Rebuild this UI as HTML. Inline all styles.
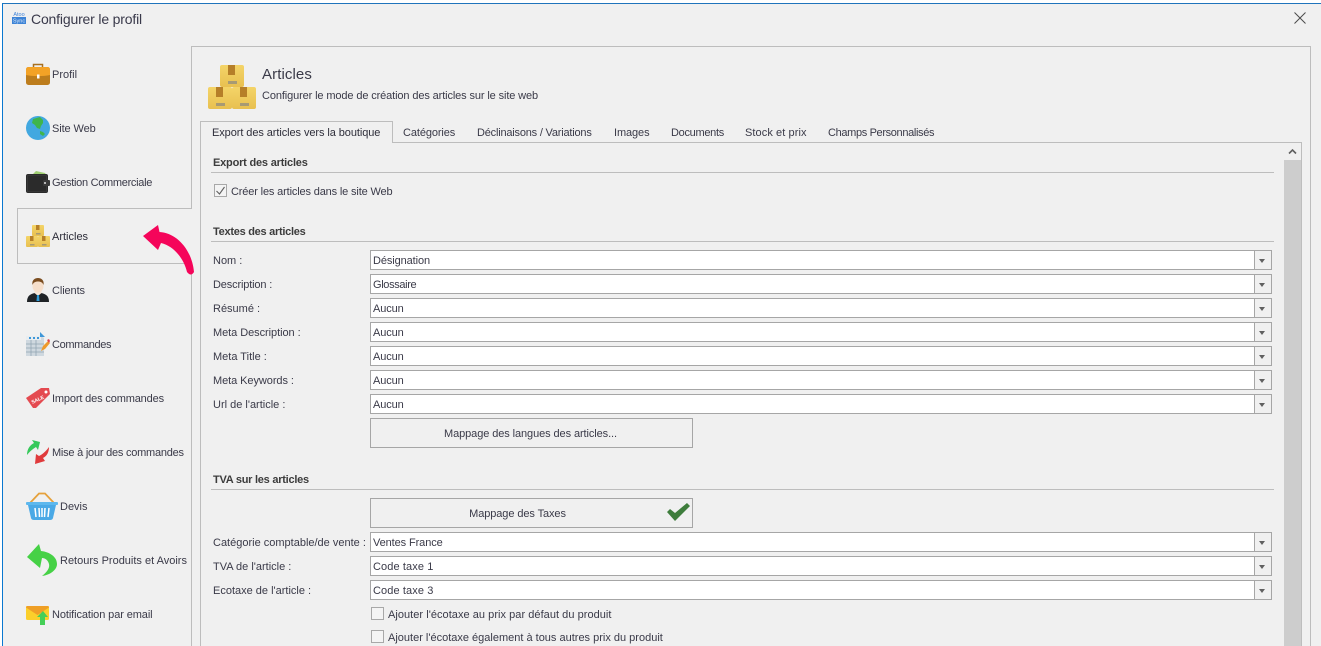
<!DOCTYPE html>
<html lang="fr"><head><meta charset="utf-8"><title>Configurer le profil</title>
<style>
html,body{margin:0;padding:0;width:1321px;height:646px;overflow:hidden;background:#fff}
body{position:relative;font:11px/14px "Liberation Sans",Arial,sans-serif;color:#3a3a48}
.a,.t,.c,.b,.l,.ck,svg{position:absolute}
#win{position:absolute;left:2px;top:3px;width:1319px;height:643px;background:#f0f0f0;border-left:1px solid #0a78d0;border-top:1px solid #1f74bc;box-sizing:border-box}
.t{white-space:nowrap;height:14px;margin-top:1px}
.l{background:#bdbdbd;left:211px;width:1063px;height:1px}
.h{font-weight:bold;color:#3c3c3c;left:213px}
.c{left:370px;width:902px;height:20px;box-sizing:border-box;background:#fff;border:1px solid #a6a6a6;padding-left:2px;line-height:21px;letter-spacing:-.1px}
.c i{position:absolute;right:0;top:0;width:16px;height:18px;background:#f0f0f0;border-left:1px solid #a6a6a6}
.c i:after{content:"";position:absolute;left:4px;top:8px;border:3.5px solid transparent;border-top:4px solid #606060;border-bottom:0}
.b{left:370px;width:323px;height:30px;box-sizing:border-box;border:1px solid #a6a6a6;background:#f0f0f0;text-align:center;line-height:30px;letter-spacing:-.09px}
.ck{width:13px;height:13px;box-sizing:border-box;border:1px solid #a8a8a8;background:#f4f4f4}
</style></head><body>
<svg width="0" height="0" style="position:absolute"><defs>
<linearGradient id="bg" x1="0" y1="0" x2="0" y2="1"><stop offset="0" stop-color="#f4d468"/><stop offset="1" stop-color="#e8c050"/></linearGradient>
<symbol id="box" viewBox="0 0 48 44">
<rect x="12" y="0" width="24" height="22" rx="2" fill="url(#bg)"/><rect x="20" y="0" width="7" height="10" fill="#b67f28"/><rect x="20" y="16" width="9" height="3" fill="#a79a74"/>
<rect x="0" y="22" width="24" height="22" rx="2" fill="url(#bg)"/><rect x="8" y="22" width="7" height="10" fill="#b67f28"/><rect x="8" y="38" width="9" height="3" fill="#a79a74"/>
<rect x="24" y="22" width="24" height="22" rx="2" fill="url(#bg)"/><rect x="32" y="22" width="7" height="10" fill="#b67f28"/><rect x="32" y="38" width="9" height="3" fill="#a79a74"/>
</symbol></defs></svg>

<div id="win"></div>

<!-- panel borders -->
<div class="a" style="left:191px;top:46px;width:1120px;height:1px;background:#bdbdbd"></div>
<div class="a" style="left:191px;top:46px;width:1px;height:163px;background:#bdbdbd"></div>
<div class="a" style="left:191px;top:263px;width:1px;height:383px;background:#bdbdbd"></div>
<div class="a" style="left:1310px;top:46px;width:1px;height:600px;background:#bdbdbd"></div>
<div class="a" style="left:17px;top:208px;width:175px;height:1px;background:#bdbdbd"></div>
<div class="a" style="left:17px;top:208px;width:1px;height:56px;background:#bdbdbd"></div>
<div class="a" style="left:17px;top:263px;width:175px;height:1px;background:#bdbdbd"></div>

<!-- title bar -->
<svg style="left:11px;top:11px" width="16" height="13" viewBox="0 0 16 13"><rect x="1" y="6" width="14" height="7" fill="#3d83d6"/><text x="8" y="5" text-anchor="middle" font-size="5.500" fill="#3f83d8" font-family="Liberation Sans">Atoo</text><text x="8" y="11.500" text-anchor="middle" font-size="5.500" fill="#dbe9f8" font-family="Liberation Sans">Sync</text></svg>
<div class="t" style="left:31px;top:10px;font-size:14px;line-height:16px;height:16px;letter-spacing:-.17px;color:#39394a">Configurer le profil</div>
<svg style="left:1294px;top:12px" width="12" height="12" viewBox="0 0 12 12"><path d="M.5.5l11 11M11.500.5l-11 11" stroke="#4a4a4a" stroke-width="1" fill="none"/></svg>

<!-- sidebar icons -->
<svg style="left:26px;top:63px" width="24" height="22" viewBox="0 0 24 22"><path d="M7.500 4.500V1.500h9v3" fill="none" stroke="#a8701f" stroke-width="1.500"/><rect y="4" width="24" height="18" rx="2.500" fill="#bd7d1d"/><path d="M0 6.500A2.500 2.500 0 0 1 2.500 4h19A2.500 2.500 0 0 1 24 6.500V12c-7 1.500-17 1.500-24 0z" fill="#f3a226"/><rect x="11" y="11.500" width="2.500" height="4" fill="#fff"/></svg>
<svg style="left:26px;top:116px" width="24" height="24" viewBox="0 0 24 24"><circle cx="12" cy="12" r="12" fill="#42a8e0"/><path d="M7 3l7-2 3 3 0 3-2 3-1 3-3-1-2-3-3-2zM14 15l3 1 2 2-2 2-3-2z" fill="#3fb54c"/></svg>
<svg style="left:26px;top:169px" width="24" height="25" viewBox="0 0 24 25"><path d="M6 6l4-4 9 2 2 3z" fill="#9fce72"/><rect y="5" width="22" height="19" rx="2" fill="#2b2b2b"/><rect x="1.500" y="6.500" width="19" height="16" fill="none" stroke="#555" stroke-width=".6" stroke-dasharray="1 1"/><rect x="17" y="11" width="7" height="6" rx="1" fill="#3a3a3a"/><circle cx="19" cy="14" r="1" fill="#ddd"/></svg>
<svg style="left:26px;top:225px" width="24" height="22"><use href="#box" width="24" height="22"/></svg>
<svg style="left:27px;top:278px" width="22" height="24" viewBox="0 0 22 24"><path d="M0 24c0-6 3-8 8-9h6c5 1 8 3 8 9z" fill="#1f2326"/><path d="M7.500 15l3.500 3 3.500-3v-3h-7z" fill="#f6e6d8"/><path d="M10 17h2l.5 6h-3z" fill="#2f9ad6"/><ellipse cx="11" cy="8" rx="5.500" ry="6.500" fill="#f6dfcb"/><path d="M5.500 7C4.500 2 8 0 11 0s6.500 2 5.500 7C15.500 4.500 14 3.500 11 3.500S6.500 4.500 5.500 7z" fill="#7b4d20"/></svg>
<svg style="left:26px;top:332px" width="24" height="24" viewBox="0 0 24 24"><path d="M0 4h15l3 2v18H0z" fill="#cfd8df"/><path d="M0 4h15v4H0z" fill="#e8edf0"/><path d="M3 5h2v2H3zM7 5h2v2H7zM11 5h2v2h-2z" fill="#3f97d8"/><path d="M14 0l5 5h-5z" fill="#3f97d8"/><path d="M0 12h18M0 16h18M0 20h18M5 8v16M10 8v16" stroke="#93a5b3" stroke-width=".8"/><path d="M15 19l2-5 5-5 2 2-5 6z" fill="#ee9a2c"/><path d="M21 8l2-1 1 2-1 2z" fill="#e0454f"/></svg>
<svg style="left:26px;top:387px" width="24" height="22" viewBox="0 0 24 22"><path d="M0 11L15 1l8 0 1 6-4 4-10 10-3 0z" fill="#e44a50"/><circle cx="20" cy="5" r="1.500" fill="#fff"/><text x="5" y="15" font-size="5" font-weight="bold" fill="#fff" transform="rotate(-25 10 13)" font-family="Liberation Sans">SALE</text></svg>
<svg style="left:27px;top:440px" width="24" height="25" viewBox="0 0 24 25"><path d="M0 15C0 9 3 5 7 3L5 0 13 2 11 10 9 7C6 9 3 11 0 15Z" fill="#35c95a"/><path d="M22 7C22 12 20 16 16 18L18 21 8 24 9 14 12 16C16 14 19 11 22 7Z" fill="#e03a3c"/></svg>
<svg style="left:26px;top:491px" width="32" height="30" viewBox="0 0 32 30"><path d="M4 12L13 2.500h6L28 12" fill="none" stroke="#e5a13c" stroke-width="1.800"/><rect y="11" width="32" height="3" rx="1" fill="#5db8ee"/><path d="M2 14h28l-3 13q-.5 2-3 2H8q-2.500 0-3-2z" fill="#4aa9e6"/><path d="M9 17l1 9M13 17l.5 9M16 17v9M19 17l-.5 9M23 17l-1 9" stroke="#fff" stroke-width="1.500"/></svg>
<svg style="left:27px;top:544px" width="31" height="33" viewBox="0 0 31 33"><path d="M0 13L12 0 14 7C23 8 30 13 30 20 30 26 23 31 15 32 20 28 23 24 22 20 21 16 18 14 15 14L13 24Z" fill="#46d146"/></svg>
<svg style="left:26px;top:606px" width="24" height="22" viewBox="0 0 24 22"><rect y="0" width="23" height="14" rx="1.500" fill="#fbcf2b"/><path d="M0 1.500A1.500 1.500 0 0 1 1.500 0h20A1.500 1.500 0 0 1 23 1.500L11.500 9z" fill="#ef9f26"/><path d="M16 5l5 6h-3v8h-5v-8h-3z" fill="#45cf57" transform="translate(1,0)"/></svg>

<!-- sidebar labels -->
<div class="t" style="left:52px;top:67px">Profil</div>
<div class="t" style="left:52px;top:121px;letter-spacing:-.1px">Site Web</div>
<div class="t" style="left:52px;top:175px;letter-spacing:-.3px">Gestion Commerciale</div>
<div class="t" style="left:52px;top:229px;color:#2c2c38">Articles</div>
<div class="t" style="left:52px;top:283px;letter-spacing:-.1px">Clients</div>
<div class="t" style="left:52px;top:337px;letter-spacing:-.35px">Commandes</div>
<div class="t" style="left:52px;top:391px;letter-spacing:-.15px">Import des commandes</div>
<div class="t" style="left:52px;top:445px;letter-spacing:-.23px">Mise à jour des commandes</div>
<div class="t" style="left:60px;top:499px">Devis</div>
<div class="t" style="left:60px;top:553px">Retours Produits et Avoirs</div>
<div class="t" style="left:52px;top:607px;letter-spacing:-.1px">Notification par email</div>

<!-- pink arrow -->
<svg style="left:140px;top:222px" width="56" height="56" viewBox="140 222 56 56"><path d="M143 236L158 225L159.500 232C177 233 192 250 194 272Q191 277 187 272C184 259 174 246 161 243L158 250Z" fill="#f5055a"/></svg>

<!-- header -->
<svg style="left:208px;top:65px" width="48" height="44"><use href="#box" width="48" height="44"/></svg>
<div class="t" style="left:262px;top:66px;font-size:15px;line-height:16px;height:16px;letter-spacing:.1px">Articles</div>
<div class="t" style="left:262px;top:88px;letter-spacing:-.12px">Configurer le mode de création des articles sur le site web</div>

<!-- tabs -->
<div class="a" style="left:200px;top:142px;width:1102px;height:504px;border:1px solid #bdbdbd;border-bottom:0;box-sizing:border-box"></div>
<div class="a" style="left:200px;top:121px;width:193px;height:22px;box-sizing:border-box;border:1px solid #bdbdbd;border-bottom:0;background:#f0f0f0"></div>
<div class="t" style="left:212px;top:125px;color:#2e2e3a;letter-spacing:-.08px">Export des articles vers la boutique</div>
<div class="t" style="left:403px;top:125px;letter-spacing:-.1px">Catégories</div>
<div class="t" style="left:477px;top:125px;letter-spacing:-.2px">Déclinaisons / Variations</div>
<div class="t" style="left:614px;top:125px;letter-spacing:-.1px">Images</div>
<div class="t" style="left:671px;top:125px;letter-spacing:-.3px">Documents</div>
<div class="t" style="left:745px;top:125px;letter-spacing:.08px">Stock et prix</div>
<div class="t" style="left:828px;top:125px;letter-spacing:-.35px">Champs Personnalisés</div>

<!-- scrollbar -->
<div class="a" style="left:1284px;top:143px;width:17px;height:503px;background:#cdcdcd"></div>
<div class="a" style="left:1284px;top:143px;width:17px;height:17px;background:#f0f0f0"></div>
<svg style="left:1288px;top:148px" width="9" height="7" viewBox="0 0 9 7"><path d="M1 5.500L4.500 2 8 5.500" fill="none" stroke="#606060" stroke-width="1.600"/></svg>

<!-- section: export -->
<div class="t h" style="top:155px;letter-spacing:-.2px">Export des articles</div>
<div class="l" style="top:172px"></div>
<div class="ck" style="left:214px;top:184px"></div>
<svg style="left:215px;top:186px" width="11" height="10" viewBox="0 0 11 10"><path d="M1.500 5l3 3 5-7" fill="none" stroke="#606060" stroke-width="1.100"/></svg>
<div class="t" style="left:231px;top:184px;letter-spacing:-.15px">Créer les articles dans le site Web</div>

<!-- section: textes -->
<div class="t h" style="top:224px;letter-spacing:-.27px">Textes des articles</div>
<div class="l" style="top:241px"></div>
<div class="t" style="left:213px;top:253px">Nom :</div><div class="c" style="top:250px">Désignation<i></i></div>
<div class="t" style="left:213px;top:277px;letter-spacing:-.15px">Description :</div><div class="c" style="top:274px;letter-spacing:-.35px">Glossaire<i></i></div>
<div class="t" style="left:213px;top:301px">Résumé :</div><div class="c" style="top:298px">Aucun<i></i></div>
<div class="t" style="left:213px;top:325px;letter-spacing:-.06px">Meta Description :</div><div class="c" style="top:322px">Aucun<i></i></div>
<div class="t" style="left:213px;top:349px">Meta Title :</div><div class="c" style="top:346px">Aucun<i></i></div>
<div class="t" style="left:213px;top:373px;letter-spacing:-.07px">Meta Keywords :</div><div class="c" style="top:370px">Aucun<i></i></div>
<div class="t" style="left:213px;top:397px">Url de l'article :</div><div class="c" style="top:394px">Aucun<i></i></div>
<div class="b" style="top:418px;padding-right:2px">Mappage des langues des articles...</div>

<!-- section: TVA -->
<div class="t h" style="top:472px;letter-spacing:-.25px">TVA sur les articles</div>
<div class="l" style="top:489px"></div>
<div class="b" style="top:498px;padding-right:28px">Mappage des Taxes</div>
<svg style="left:666px;top:503px" width="25" height="19" viewBox="0 0 25 19"><path d="M1 9l3-3 5 4L21 0l3 3L9 18z" fill="#3e7d3c"/></svg>
<div class="t" style="left:213px;top:535px">Catégorie comptable/de vente :</div><div class="c" style="top:532px">Ventes France<i></i></div>
<div class="t" style="left:213px;top:559px">TVA de l'article :</div><div class="c" style="top:556px;letter-spacing:.1px">Code taxe 1<i></i></div>
<div class="t" style="left:213px;top:583px">Ecotaxe de l'article :</div><div class="c" style="top:580px;letter-spacing:.1px">Code taxe 3<i></i></div>
<div class="ck" style="left:371px;top:607px"></div>
<div class="t" style="left:388px;top:607px;letter-spacing:.04px">Ajouter l'écotaxe au prix par défaut du produit</div>
<div class="ck" style="left:371px;top:630px"></div>
<div class="t" style="left:388px;top:630px">Ajouter l'écotaxe également à tous autres prix du produit</div>
</body></html>
